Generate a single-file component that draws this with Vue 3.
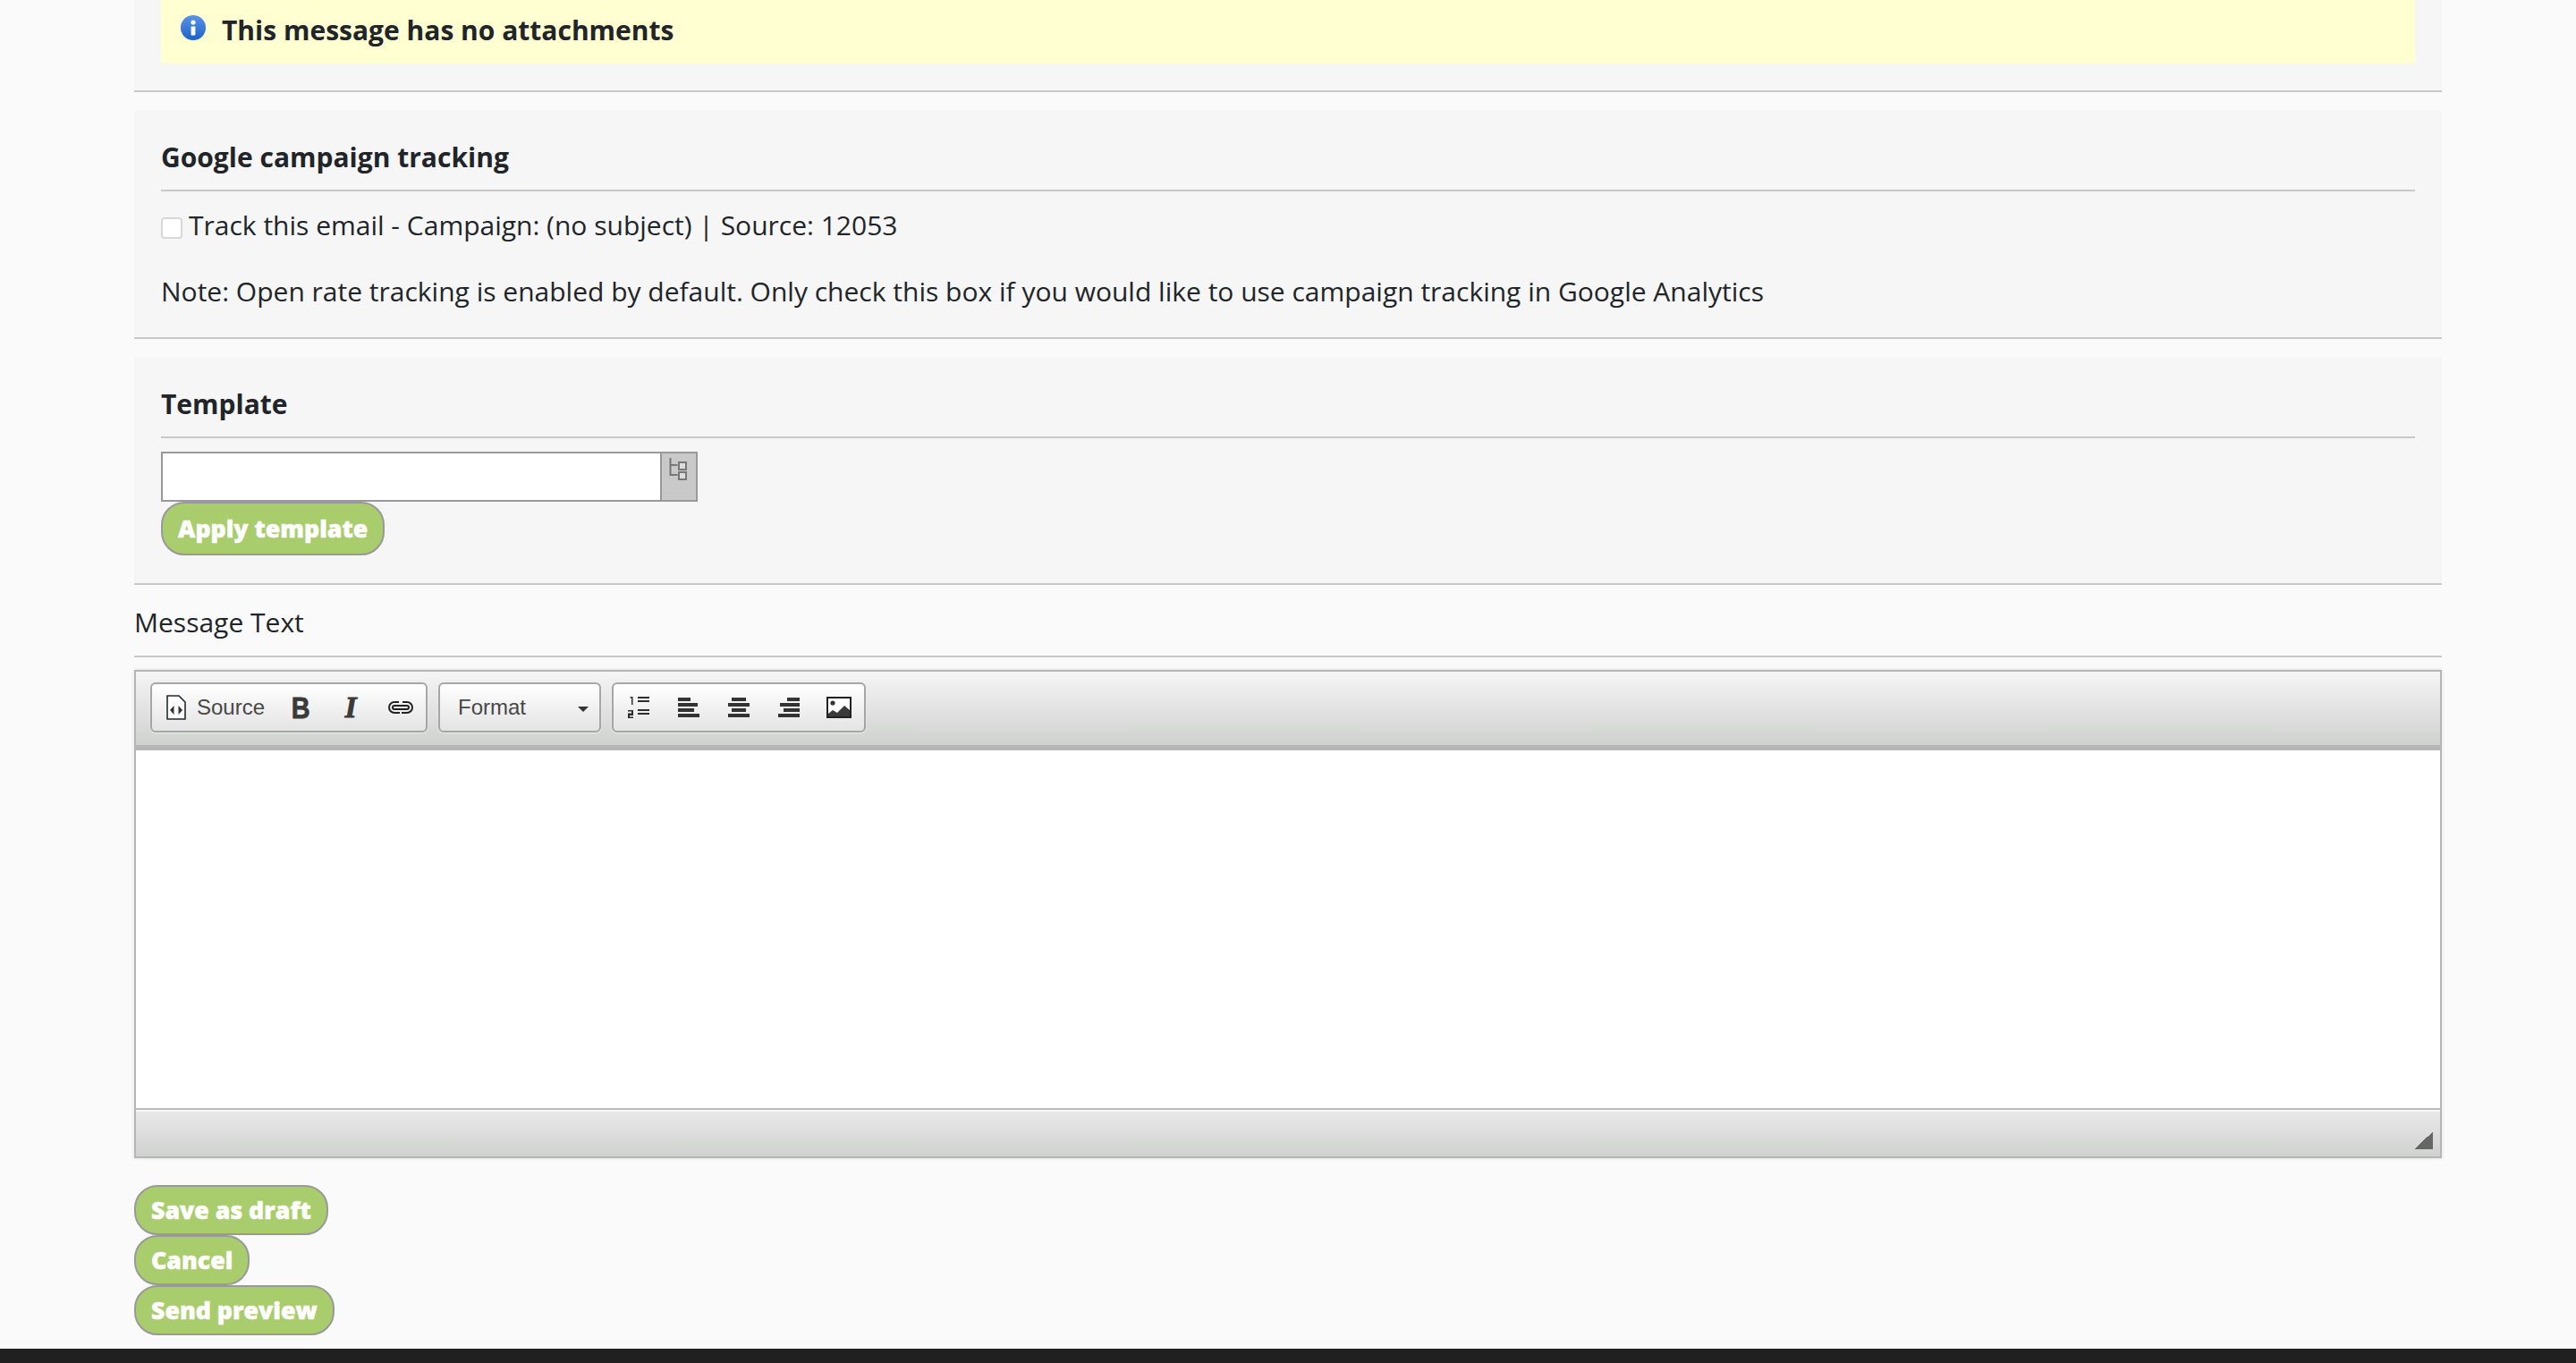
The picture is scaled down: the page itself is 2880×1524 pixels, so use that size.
<script setup>
const alignRows = {
  left: [[0, 14], [0, 22], [0, 18], [0, 24]],
  center: [[4, 16], [0, 24], [4, 16], [0, 24]],
  right: [[10, 14], [2, 22], [6, 18], [0, 24]]
}
const alignNames = ['left', 'center', 'right']
const bottomButtons = ['Save as draft', 'Cancel', 'Send preview']
</script>

<template>
  <div class="page">
    <main class="content">
      <section class="panel first">
        <div class="notice">
          <svg class="info" viewBox="0 0 28 28" width="28" height="28">
            <defs>
              <linearGradient id="infoBlue" x1="0" y1="0" x2="0" y2="1">
                <stop offset="0" stop-color="#5b93e8" />
                <stop offset="1" stop-color="#1c62c8" />
              </linearGradient>
            </defs>
            <circle cx="14" cy="14" r="14" fill="url(#infoBlue)" />
            <circle cx="14" cy="8" r="2.6" fill="#fff" />
            <rect x="11.6" y="12.5" width="4.8" height="10" rx="0.8" fill="#fff" />
          </svg>
          <span>This message has no attachments</span>
        </div>
      </section>

      <section class="panel tracking">
        <h3>Google campaign tracking</h3>
        <label class="check-row">
          <input type="checkbox" />
          <span>Track this email - Campaign: (no subject) | Source: 12053</span>
        </label>
        <p class="note">Note: Open rate tracking is enabled by default. Only check this box if you would like to use campaign tracking in Google Analytics</p>
      </section>

      <section class="panel template">
        <h3>Template</h3>
        <div class="lookup">
          <div class="lookup-input"></div>
          <div class="lookup-button">
            <svg viewBox="0 0 22 25" width="22" height="25" fill="none" stroke="#777" stroke-width="2">
              <path d="M1.500 0v19h8M1.500 8h8" />
              <rect x="11" y="5" width="8" height="8" fill="#ddd" />
              <rect x="11" y="16" width="8" height="8" fill="#ddd" />
            </svg>
          </div>
        </div>
        <button type="button" class="action tall">Apply template</button>
      </section>

      <div class="field-label">Message Text</div>

      <div class="editor">
        <div class="toolbar">
          <div class="group">
            <span class="tool source">
              <svg viewBox="0 0 22 28" width="22" height="28">
                <path d="M1 1h13l7 7v19H1z" fill="#fff" stroke="#1f2a2a" stroke-width="1.600" />
                <path d="M8.500 12l-4.500 5 4.500 5zM13.500 12l4.500 5-4.500 5z" fill="#333" />
              </svg>
              <span>Source</span>
            </span>
            <span class="tool">
              <span class="glyph bold">B</span>
            </span>
            <span class="tool">
              <span class="glyph italic">I</span>
            </span>
            <span class="tool">
              <svg viewBox="0 0 28 14" width="28" height="14" fill="none" stroke="#222" stroke-width="2">
                <path d="M12 1H7a6 6 0 0 0 0 12h6" />
                <path d="M16 1h5a6 6 0 0 1 0 12h-6" />
                <path d="M7 5h14a2 2 0 0 1 0 4H7a2 2 0 0 1 0-4z" />
              </svg>
            </span>
          </div>

          <div class="group combo">
            <span>Format</span>
            <i class="caret"></i>
          </div>

          <div class="group">
            <span class="tool">
              <svg viewBox="0 0 24 25" width="24" height="25" fill="#2d2d2d">
                <path d="M2.500 0h3v9H4V1.600H2.500z" />
                <rect x="11" y="0" width="13" height="2" />
                <rect x="11" y="4" width="13" height="2" />
                <path d="M0 15h6v6H2v1.500h4V24H0v-5.500h4V16.500H0z" />
                <rect x="11" y="14" width="13" height="2" />
                <rect x="11" y="18" width="13" height="2" />
              </svg>
            </span>
            <span v-for="name in alignNames" :key="name" class="tool">
              <svg viewBox="0 0 24 22" width="24" height="22" fill="#333">
                <rect v-for="(row, i) in alignRows[name]" :key="i" :x="row[0]" :y="i * 6" :width="row[1]" height="4" />
              </svg>
            </span>
            <span class="tool">
              <svg viewBox="0 0 28 24" width="28" height="24">
                <rect x="1" y="1" width="26" height="22" fill="#fff" stroke="#222" stroke-width="2" />
                <circle cx="7" cy="7" r="2.600" fill="#333" />
                <path d="M2 22v-3l5-4 5 3 8-8 6 5v7z" fill="#3a3a3a" />
              </svg>
            </span>
          </div>
        </div>

        <div class="editor-body"></div>

        <div class="editor-foot">
          <i class="resizer"></i>
        </div>
      </div>

      <div class="actions">
        <button v-for="label in bottomButtons" :key="label" type="button" class="action">{{ label }}</button>
      </div>
    </main>
    <footer class="footer"></footer>
  </div>
</template>

<style>
html, body {
  margin: 0;
  background: #fafafa;
}
</style>

<style scoped>
.page {
  width: 2880px;
  height: 1524px;
  overflow: hidden;
  display: flex;
  flex-direction: column;
  background: #fafafa;
  font-family: "Open Sans", "Liberation Sans", sans-serif;
  color: #212529;
}
.content {
  flex: 1;
  width: 2580px;
  margin-left: 150px;
}
.footer {
  height: 16px;
  background: #202020;
}
.panel {
  background: #f6f6f6;
  padding: 0 30px;
  border-bottom: 2px solid #c8c8c8;
}
.first {
  padding-bottom: 30px;
}
.notice {
  height: 71px;
  background: #ffffd2;
  display: flex;
  align-items: flex-start;
  padding-left: 22px;
  font-size: 30px;
  font-weight: 700;
  line-height: 34px;
}
.notice .info {
  margin: 17px 18px 0 0;
}
.notice span {
  margin-top: 17px;
}
.tracking {
  margin-top: 20px;
  padding-top: 33px;
  padding-bottom: 31px;
}
.template {
  margin-top: 21px;
  padding-top: 32px;
  padding-bottom: 31px;
}
h3 {
  margin: 0;
  font-size: 30px;
  font-weight: 700;
  line-height: 40px;
  padding-bottom: 16px;
  border-bottom: 2px solid #c8c8c8;
}
.check-row {
  display: flex;
  align-items: center;
  height: 40px;
  margin-top: 18px;
  font-size: 30px;
  line-height: 40px;
}
.check-row input {
  appearance: none;
  width: 24px;
  height: 24px;
  margin: 6px 7px 0 0;
  background: #fff;
  border: 2px solid #d8d8d8;
  border-radius: 4px;
  box-sizing: border-box;
}
.note {
  margin: 34px 0 0;
  font-size: 30px;
  line-height: 40px;
}
.lookup {
  display: flex;
  width: 600px;
  height: 56px;
  margin-top: 15px;
}
.lookup-input {
  flex: 1;
  background: #fff;
  border: 2px solid #999;
  border-right: 0;
}
.lookup-button {
  width: 42px;
  box-sizing: border-box;
  background: #c9c9c9;
  border: 2px solid #999;
  display: flex;
  justify-content: center;
  align-items: flex-start;
  padding-top: 5px;
}
.action {
  display: block;
  box-sizing: border-box;
  height: 56px;
  padding: 0 17px;
  background: #a9cd6c;
  border: 2px solid #999;
  border-radius: 26px;
  color: #fff;
  font-family: "Open Sans", "Liberation Sans", sans-serif;
  font-size: 26.700px;
  font-weight: 800;
  -webkit-text-stroke: 0.500px #fff;
  line-height: 1;
  white-space: nowrap;
}
.tall {
  height: 60px;
}
.field-label {
  margin-top: 22px;
  padding-bottom: 17px;
  font-size: 30px;
  line-height: 40px;
  border-bottom: 2px solid #c8c8c8;
}
.editor {
  margin-top: 14px;
  border: 2px solid #b6b6b6;
  box-shadow: 0 0 4px rgba(0, 0, 0, 0.12);
  font-family: "Liberation Sans", Arial, sans-serif;
}
.toolbar {
  box-sizing: border-box;
  display: flex;
  gap: 12px;
  padding: 12px 0 0 16px;
  background: linear-gradient(#f5f5f5, #cfd1cf);
  border-bottom: 6px solid #b6b6b6;
  height: 88px;
}
.group {
  height: 56px;
  box-sizing: border-box;
  display: flex;
  align-items: center;
  border: 2px solid #a6a6a6;
  border-radius: 6px;
  background: linear-gradient(#fff, #e4e4e4);
  box-shadow: 0 1px 2px rgba(255, 255, 255, 0.6);
}
.tool {
  width: 56px;
  height: 52px;
  display: flex;
  align-items: center;
  justify-content: center;
  color: #474747;
}
.source {
  width: 138px;
  justify-content: flex-start;
  padding-left: 16px;
  box-sizing: border-box;
  gap: 12px;
  font-size: 24px;
}
.glyph {
  font-family: "Liberation Serif", serif;
  font-weight: 700;
  font-size: 34px;
  color: #3a3a3a;
  -webkit-text-stroke: 0.800px #3a3a3a;
}
.bold {
  font-family: "Liberation Sans", sans-serif;
  transform: scaleX(0.85);
}
.italic {
  font-style: italic;
}
.combo {
  width: 182px;
  padding-left: 20px;
  font-size: 24px;
  color: #474747;
  position: relative;
}
.caret {
  position: absolute;
  left: 154px;
  top: 25px;
  width: 0;
  height: 0;
  border-left: 6px solid transparent;
  border-right: 6px solid transparent;
  border-top: 6px solid #333;
}
.editor-body {
  height: 400px;
  background: #fff;
  border-bottom: 2px solid #bcbcbc;
}
.editor-foot {
  height: 52px;
  box-sizing: border-box;
  border-top: 2px solid #f6f6f6;
  background: linear-gradient(#e8e9e8, #cfd1cf);
  display: flex;
  justify-content: flex-end;
  align-items: flex-end;
  padding: 0 8px 8px 0;
}
.resizer {
  width: 20px;
  height: 20px;
  background: linear-gradient(135deg, transparent 50%, #666 50%);
}
.actions {
  margin-top: 30px;
}
</style>
